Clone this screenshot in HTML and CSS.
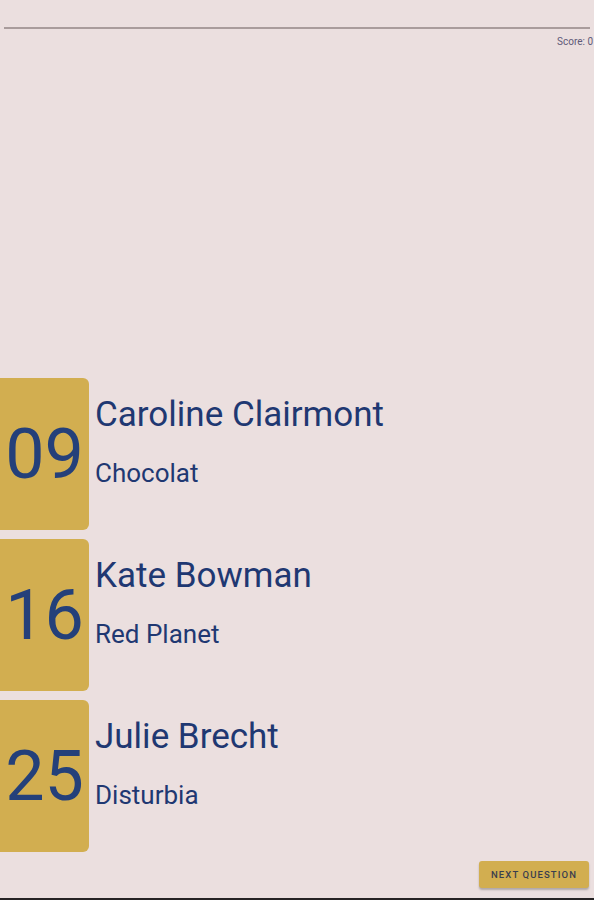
FILE: index.html
```html
<!DOCTYPE html>
<html lang="en">
  <head>
    <meta charset="UTF-8" />
    <meta name="viewport" content="width=device-width, initial-scale=1.0" />
    <title>Quiz</title>
    <link rel="stylesheet" href="styles.css">
  </head>
  <body>
    <div class="page">
      <div class="progress"></div>
      <div class="score-row">
        <span class="score">Score: 0</span>
      </div>

      <div class="options">
        <div class="option">
          <div class="num-box">09</div>
          <div class="info">
            <div class="name">Caroline Clairmont</div>
            <div class="film">Chocolat</div>
          </div>
        </div>
        <div class="option">
          <div class="num-box">16</div>
          <div class="info">
            <div class="name">Kate Bowman</div>
            <div class="film">Red Planet</div>
          </div>
        </div>
        <div class="option">
          <div class="num-box">25</div>
          <div class="info">
            <div class="name">Julie Brecht</div>
            <div class="film">Disturbia</div>
          </div>
        </div>
      </div>

      <div class="actions">
        <button class="next-btn">Next Question</button>
      </div>
    </div>
  </body>
</html>
```

FILE: styles.css
```css
body {
  margin: 0;
  padding: 0;
  background: #ebdfdf;
  font-family: Roboto, "Noto Sans", sans-serif;
  overflow: hidden;
}

.page {
  display: flex;
  flex-direction: column;
  height: 900px;
  box-sizing: border-box;
  border-bottom: 2px solid #262324;
}

.progress {
  margin: 27px 4px 0 4px;
  height: 2px;
  background: #a99c9c;
}

.score-row {
  display: flex;
  justify-content: flex-end;
  margin-top: 7px;
}

.score {
  font-size: 10px;
  line-height: 12px;
  color: #5f5a78;
  white-space: nowrap;
  margin-right: 1px;
}

.options {
  margin-top: auto;
  display: flex;
  flex-direction: column;
  gap: 9px;
}

.option {
  display: flex;
  gap: 6px;
}

.num-box {
  width: 89px;
  height: 152px;
  flex-shrink: 0;
  display: flex;
  align-items: center;
  justify-content: center;
  background: #d2ae50;
  border-radius: 0 6px 6px 0;
  color: #24407a;
  font-size: 70px;
}

.info {
  padding-top: 16px;
  color: #1f3872;
}

.name {
  font-size: 35px;
}

.film {
  margin-top: 23px;
  font-size: 26px;
}

.actions {
  display: flex;
  justify-content: flex-end;
  margin: 9px 5px 10px 0;
}

.next-btn {
  height: 27px;
  padding: 0 12px;
  border: none;
  border-radius: 3px;
  background: #d2ae50;
  color: #3a3e4e;
  font-family: Roboto, "Noto Sans", sans-serif;
  font-size: 9.5px;
  font-weight: 500;
  letter-spacing: 1.1px;
  text-transform: uppercase;
  box-shadow: 0 2px 2px rgba(0, 0, 0, 0.25);
  cursor: pointer;
}
```
